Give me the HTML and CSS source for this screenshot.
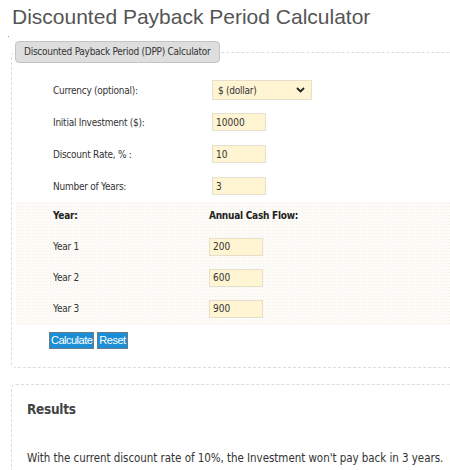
FILE: index.html
```html
<!DOCTYPE html>
<html>
<head>
<meta charset="utf-8">
<link rel="stylesheet" href="styles.css">
</head>
<body>
<div class="page">
  <h1 class="title">Discounted Payback Period Calculator</h1>
  <div class="dot"></div>
  <fieldset class="calc">
    <legend class="legend">Discounted Payback Period (DPP) Calculator</legend>
    <div class="form">
      <div class="row"><span class="label">Currency (optional):</span>
        <span class="selwrap"><select class="sel"><option>$ (dollar)</option></select>
          <svg class="chev" width="9" height="6" viewBox="0 0 9 6"><path d="M1 1 L4.5 4.5 L8 1" fill="none" stroke="#222" stroke-width="1.8"/></svg>
        </span>
      </div>
      <div class="row"><span class="label">Initial Investment ($):</span><input class="inp" value="10000"></div>
      <div class="row"><span class="label">Discount Rate, % :</span><input class="inp" value="10"></div>
      <div class="row"><span class="label">Number of Years:</span><input class="inp" value="3"></div>
    </div>
    <div class="years">
      <div class="yrow yhead"><span class="ylabel">Year:</span><span>Annual Cash Flow:</span></div>
      <div class="yrow"><span class="ylabel">Year 1</span><input class="inp" value="200"></div>
      <div class="yrow"><span class="ylabel">Year 2</span><input class="inp" value="600"></div>
      <div class="yrow"><span class="ylabel">Year 3</span><input class="inp" value="900"></div>
    </div>
    <div class="buttons">
      <button class="btn">Calculate</button><button class="btn">Reset</button>
    </div>
  </fieldset>
  <div class="results">
    <h2 class="rtitle">Results</h2>
    <p class="rtext">With the current discount rate of 10%, the Investment won't pay back in 3 years.</p>
  </div>
</div>
</body>
</html>
```

FILE: styles.css
```css
html, body {
  margin: 0;
  padding: 0;
  overflow: hidden;
  background: #fff;
}
.page {
  width: 480px;
  height: 470px;
  overflow: hidden;
  padding: 0 0 0 11px;
  font-family: "DejaVu Sans Condensed", "DejaVu Sans", sans-serif;
  color: #333;
}
.title {
  font-family: "Liberation Sans", Arial, sans-serif;
  font-weight: normal;
  font-size: 21px;
  color: #555;
  margin: 0;
  padding: 5px 0 0 1px;
  height: 25px;
  line-height: 24px;
}
.dot {
  width: 1px;
  height: 1px;
  background: #999;
  margin: 6px 0 0 -3px;
}
.calc {
  margin: 0;
  margin-top: 4px;
  border: 1px dashed #dcdcdc;
  border-radius: 5px;
  padding: 0 0 18px 4px;
  min-width: 0;
}
.legend {
  background: #dedede;
  border: 1px solid #c4c4c4;
  border-radius: 4px;
  font-size: 10px;
  letter-spacing: -0.27px;
  color: #333;
  padding: 0 8px;
  height: 20px;
  line-height: 20px;
  margin-left: -1px;
  white-space: nowrap;
}
.form {
  padding: 11px 0 0 37px;
}
.row {
  display: flex;
  align-items: center;
  height: 32px;
  font-size: 10px;
  letter-spacing: -0.25px;
}
.label {
  width: 159px;
}
.selwrap {
  position: relative;
  display: inline-block;
  height: 20px;
}
.sel {
  appearance: none;
  -webkit-appearance: none;
  width: 100px;
  height: 20px;
  background: #fff5d2;
  border: 1px solid #e4e0cc;
  border-radius: 0;
  font-family: "DejaVu Sans Condensed", sans-serif;
  font-size: 10px;
  letter-spacing: -0.25px;
  color: #333;
  padding: 0 0 0 5px;
  display: block;
}
.chev {
  position: absolute;
  right: 7px;
  top: 7px;
}
.inp {
  width: 54px;
  height: 18px;
  box-sizing: border-box;
  background: #fff5d2;
  border: 1px solid #e4e0cc;
  font-family: "DejaVu Sans Condensed", sans-serif;
  font-size: 10px;
  color: #333;
  padding: 0 0 0 3px;
}
.years {
  margin-top: 0;
  padding: 0 0 1px 37px;
  background-color: #fcfbf7;
  background-image: radial-gradient(#f4f0e7 0.5px, transparent 0.8px);
  background-size: 3px 3px;
}
.yrow {
  display: flex;
  align-items: center;
  height: 31px;
  font-size: 10px;
  letter-spacing: -0.25px;
}
.yhead {
  height: 26px;
  margin-bottom: 3px;
  font-weight: bold;
  color: #222;
}
.ylabel {
  width: 156px;
}
.buttons {
  display: flex;
  gap: 3px;
  padding: 7px 0 0 33px;
}
.btn {
  font-family: "Liberation Sans", Arial, sans-serif;
  font-size: 11px;
  letter-spacing: -0.5px;
  color: #fff;
  background: #1c8ed6;
  border: 1px solid #6b7b88;
  padding: 0 1px;
  height: 17px;
  line-height: 15px;
}
.results {
  margin-top: 16px;
  border: 1px dashed #dcdcdc;
  border-radius: 5px;
  padding: 14px 0 0 15px;
  height: 120px;
}
.rtitle {
  font-size: 13.5px;
  letter-spacing: -0.3px;
  font-weight: bold;
  color: #444;
  margin: 0;
  line-height: 20px;
}
.rtext {
  font-size: 11.5px;
  letter-spacing: -0.05px;
  color: #333;
  margin: 32px 0 0 0;
}
```
